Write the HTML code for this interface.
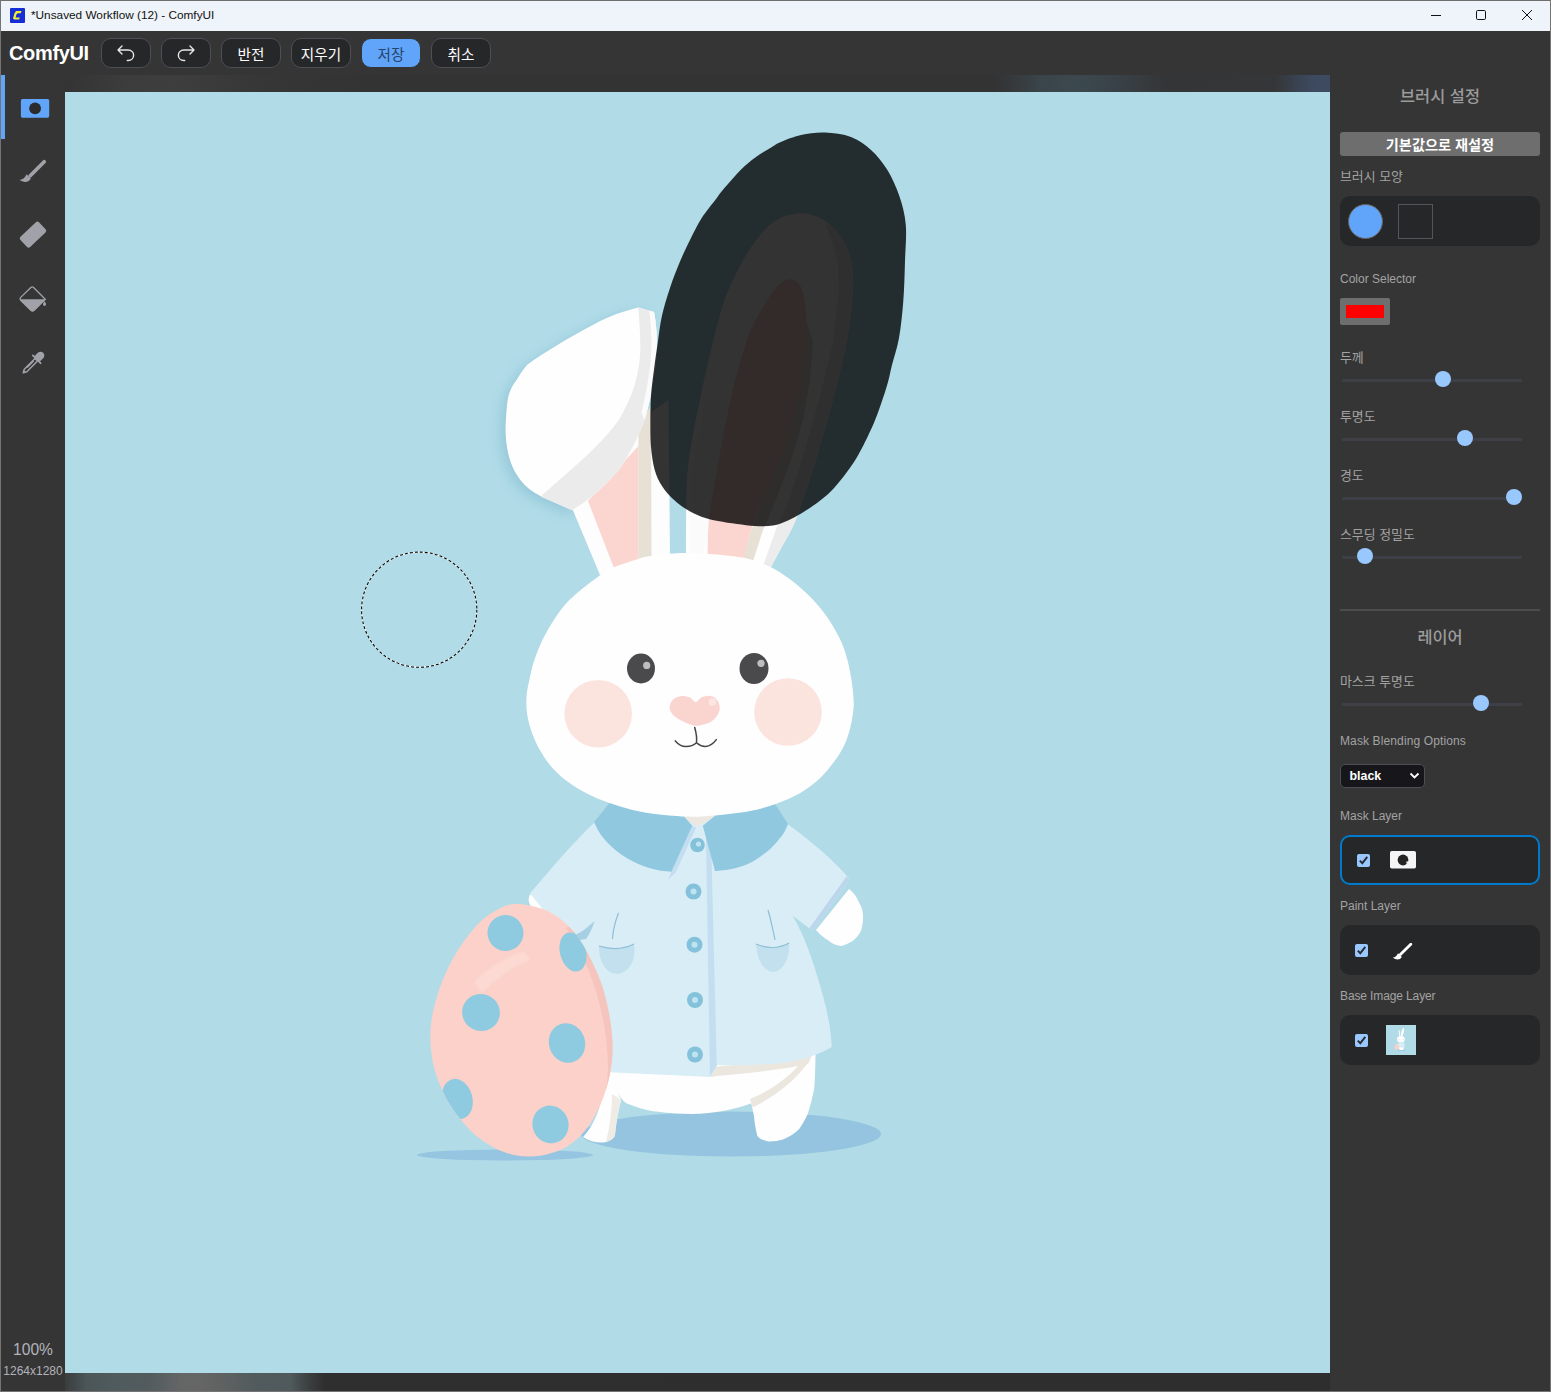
<!DOCTYPE html>
<html lang="ko">
<head>
<meta charset="utf-8">
<title>*Unsaved Workflow (12) - ComfyUI</title>
<style>
*{box-sizing:border-box;margin:0;padding:0}
html,body{width:1551px;height:1392px;overflow:hidden;background:#353535}
body{position:relative;font-family:"Liberation Sans","Noto Sans CJK KR",sans-serif;color:#fff}
.abs{position:absolute}
#frame{position:absolute;left:0;top:0;width:1551px;height:1392px;border:1px solid #747474;border-top-color:#6e6e6e;pointer-events:none;z-index:50}
#titlebar{position:absolute;left:1px;top:1px;width:1549px;height:30px;background:#eef4f9;color:#000}
#titlebar .ticon{position:absolute;left:8.800px;top:6.500px;width:15px;height:15px;background:#172dd7;border-radius:1px}
#titlebar .ttext{position:absolute;left:30px;top:7.400px;font-size:11.800px;line-height:15px;color:#111;white-space:nowrap}
#toolbar{position:absolute;left:1px;top:31px;width:1549px;height:44px;background:#353535}
#logo{position:absolute;left:9px;top:41px;font-size:20px;font-weight:bold;line-height:24px;color:#fff;letter-spacing:-0.35px}
.tbtn{position:absolute;top:38px;height:30px;background:#262729;border:1px solid #4e4e57;border-radius:10px;color:#fff;font-size:14.600px;line-height:32px;text-align:center;overflow:hidden}
.tbtn.primary{background:#60a5fa;border-color:#353535;color:#27446c}
#side{position:absolute;left:1px;top:75px;width:64px;height:1316px;background:#353535}
#canvasbg{position:absolute;left:65px;top:75px;width:1265px;height:1316px;background:#333;overflow:hidden}
#panel{position:absolute;left:1330px;top:75px;width:220px;height:1316px;background:#353535}
.lbl{position:absolute;left:1340px;font-size:12px;line-height:16px;color:#a3a3a3;white-space:nowrap}
.lbl.k{font-size:12.900px}
.hdr{position:absolute;left:1340px;width:200px;text-align:center;font-size:16.400px;line-height:22px;color:#9b9b9b;font-weight:500}
.track{position:absolute;left:1342px;width:180px;height:3.400px;border-radius:1px;background:#3f3f47}
.thumb{position:absolute;width:16px;height:16px;border-radius:50%;background:#99c8ff}
.box{position:absolute;left:1340px;width:200px;height:50px;border-radius:10px;background:#262729}
.chk{position:absolute;width:13px;height:13px;border-radius:2px;background:#99c8ff}
</style>
</head>
<body>
<div id="titlebar">
  <div class="ticon"></div>
  <div class="ttext">*Unsaved Workflow (12) - ComfyUI</div>
</div>
<div id="toolbar"></div>
<div id="logo">ComfyUI</div>
<div class="tbtn" style="left:101px;width:50px"></div>
<div class="tbtn" style="left:161px;width:50px"></div>
<div class="tbtn" style="left:221px;width:60px">반전</div>
<div class="tbtn" style="left:291px;width:60px">지우기</div>
<div class="tbtn primary" style="left:361px;width:60px">저장</div>
<div class="tbtn" style="left:431px;width:60px">취소</div>

<div id="side"></div>
<div id="canvasbg">
  <div class="abs" style="left:0;top:0;width:1265px;height:17px;background:linear-gradient(90deg,#343434 0,#3c3c3c 60px,#3e3e3e 110px,#363636 200px,#333 300px,#333 930px,#3a444a 975px,#3c484f 1010px,#384046 1060px,#343536 1100px,#353637 1210px,#3a4454 1235px,#3e4a60 1250px,#3e4a60 1265px)"></div>
  <div class="abs" style="left:0;top:1298px;width:1265px;height:18px;background:linear-gradient(90deg,#3a3d3e 0,#4c5658 22px,#505b5d 50px,#525c5e 85px,#646565 115px,#666 130px,#5e6161 160px,#515b5d 190px,#505a5c 225px,#3c4041 243px,#2f2f2f 260px,#2e2e2e 1265px)"></div>
</div>
<div id="panel"></div>

<!--PANEL-START-->
<div class="hdr" style="top:85px">브러시 설정</div>
<div class="abs" style="left:1340px;top:132px;width:200px;height:24px;background:#6e6e6e;border-radius:3px;color:#fff;font-size:14.200px;font-weight:bold;line-height:26px;text-align:center">기본값으로 재설정</div>
<div class="lbl k" style="top:169px">브러시 모양</div>
<div class="box" style="top:196px"></div>
<div class="abs" style="left:1348px;top:204px;width:35px;height:35px;border-radius:50%;background:#60a5fa;border:1px solid #6b6059"></div>
<div class="abs" style="left:1398px;top:204px;width:35px;height:35px;border:1px solid #55555a"></div>
<div class="lbl" style="top:271px">Color Selector</div>
<div class="abs" style="left:1340px;top:298px;width:50px;height:27px;background:#6e6e6e;border-radius:2px"></div>
<div class="abs" style="left:1346px;top:305px;width:38px;height:13px;background:#ff0000"></div>

<div class="lbl k" style="top:350px">두께</div>
<div class="track" style="top:379px"></div><div class="thumb" style="left:1435px;top:371px"></div>
<div class="lbl k" style="top:409px">투명도</div>
<div class="track" style="top:438px"></div><div class="thumb" style="left:1457px;top:430px"></div>
<div class="lbl k" style="top:468px">경도</div>
<div class="track" style="top:497px"></div><div class="thumb" style="left:1506px;top:489px"></div>
<div class="lbl k" style="top:527px">스무딩 정밀도</div>
<div class="track" style="top:556px"></div><div class="thumb" style="left:1357px;top:548px"></div>

<div class="abs" style="left:1340px;top:609px;width:200px;height:2px;background:#4d4d4d"></div>
<div class="hdr" style="top:626px">레이어</div>
<div class="lbl k" style="top:674px">마스크 투명도</div>
<div class="track" style="top:703px"></div><div class="thumb" style="left:1473px;top:695px"></div>
<div class="lbl" style="top:733px;letter-spacing:0.120px">Mask Blending Options</div>
<div class="abs" style="left:1340px;top:764px;width:85px;height:24px;background:#17171b;border:1px solid #4e4e58;border-radius:5px;color:#fff;font-size:12.400px;font-weight:bold;line-height:22px;padding-left:8.500px">black</div>
<svg class="abs" style="left:1409px;top:771px" width="11" height="10" viewBox="0 0 11 10"><path d="M1.5 2.500 L5.500 6.500 L9.500 2.500" fill="none" stroke="#fff" stroke-width="1.800"/></svg>

<div class="lbl" style="top:808px">Mask Layer</div>
<div class="box" style="top:835px;border:2px solid #007acc"></div>
<div class="chk" style="left:1357px;top:854px"></div>
<svg class="abs" style="left:1357px;top:854px" width="13" height="13" viewBox="0 0 13 13"><path d="M2.800 6.700 L5.300 9.200 L10.300 2.900" fill="none" stroke="#2a2b30" stroke-width="1.900"/></svg>
<svg class="abs" style="left:1390px;top:851px" width="26" height="18" viewBox="0 0 26 18"><rect x="0" y="0" width="26" height="17.500" rx="1.800" fill="#f5f5f5"/><circle cx="13" cy="9" r="5.400" fill="#242424"/><path d="M16 10.800 L18.800 10.200 L17 13.300Z" fill="#f5f5f5"/></svg>

<div class="lbl" style="top:898px">Paint Layer</div>
<div class="box" style="top:925px"></div>
<div class="chk" style="left:1355px;top:944px"></div>
<svg class="abs" style="left:1355px;top:944px" width="13" height="13" viewBox="0 0 13 13"><path d="M2.800 6.700 L5.300 9.200 L10.300 2.900" fill="none" stroke="#2a2b30" stroke-width="1.900"/></svg>
<svg class="abs" style="left:1392px;top:943px" width="21" height="18" viewBox="0 0 21 18"><path d="M18.800 1.200 L8.400 11.600" stroke="#fff" stroke-width="2.800" stroke-linecap="round" fill="none"/><path d="M6 10.200 L9.800 14 C8 17.400 3.500 17 0.800 14.600 C3.500 14.600 4.800 12.600 6 10.200Z" fill="#fff"/></svg>

<div class="lbl" style="top:988px;letter-spacing:-0.120px">Base Image Layer</div>
<div class="box" style="top:1015px"></div>
<div class="chk" style="left:1355px;top:1034px"></div>
<svg class="abs" style="left:1355px;top:1034px" width="13" height="13" viewBox="0 0 13 13"><path d="M2.800 6.700 L5.300 9.200 L10.300 2.900" fill="none" stroke="#2a2b30" stroke-width="1.900"/></svg>
<svg class="abs" style="left:1386px;top:1025px" width="30" height="30" viewBox="0 0 30 30"><rect width="30" height="30" fill="#b0dbe7"/><ellipse cx="15.200" cy="25" rx="4" ry="0.800" fill="#95c5e0"/><path d="M12.600 5.200 L13.600 5.300 L14 10.800 L13 11Z M14.800 11 C14.800 7 16.500 3 17.700 3 C18.800 3.200 18 7.500 16.500 11Z" fill="#fff"/><ellipse cx="14.900" cy="14.200" rx="3.900" ry="3.200" fill="#fff"/><rect x="12" y="17.500" width="6.500" height="5.800" rx="1" fill="#d9edf6"/><rect x="13.200" y="22.500" width="4.500" height="2.500" rx="1" fill="#fff"/><ellipse cx="10.800" cy="22" rx="2.100" ry="3" fill="#fbd1c9"/><circle cx="12.700" cy="14.600" r="0.800" fill="#fce4de"/><circle cx="17.100" cy="14.600" r="0.800" fill="#fce4de"/></svg>
<!--PANEL-END-->
<!--SIDEBAR-START-->
<div class="abs" style="left:1px;top:75px;width:4px;height:64px;background:#60a5fa"></div>
<!-- mask pen (active) -->
<svg class="abs" style="left:20px;top:97px" width="30" height="24" viewBox="0 0 30 24"><rect x="0.900" y="2.100" width="28.300" height="18.600" rx="1.600" fill="#60a5fa"/><circle cx="15.100" cy="11.300" r="5.900" fill="#2b2b2b"/></svg>
<!-- paint brush -->
<svg class="abs" style="left:18px;top:156px" width="32" height="30" viewBox="0 0 32 30"><path d="M26.200 5.800 L12.200 19.800" stroke="#a1a1a9" stroke-width="3.700" stroke-linecap="round" fill="none"/><path d="M8.600 18.200 L12.800 22.600 C11 27 5 26.800 1.500 23.800 C5.300 23.700 6.900 21.300 8.600 18.200Z" fill="#a1a1a9"/></svg>
<!-- eraser -->
<svg class="abs" style="left:16px;top:217px" width="36" height="36" viewBox="0 0 36 36"><rect x="4.200" y="10.600" width="25.600" height="14" rx="2.200" fill="#a1a1a9" transform="rotate(-43.500 17 17.600)"/></svg>
<!-- paint bucket -->
<svg class="abs" style="left:16.400px;top:282.200px" width="36" height="36" viewBox="0 0 36 36"><path d="M17.800 5.700 L29.300 17.200 L18.200 28.300 C17.200 29.300 15.800 29.300 14.800 28.300 L4.700 18.200 C3.900 17.400 3.900 16.200 4.700 15.400 L14.600 5.700 C15.500 4.800 16.900 4.800 17.800 5.700Z" fill="none" stroke="#a1a1a9" stroke-width="1.300"/><path d="M4.300 17.200 L29.600 17.200 L18.200 28.600 C17.200 29.600 15.800 29.600 14.800 28.600 L4.500 18.400Z" fill="#a1a1a9"/><path d="M28.500 19.300 C30.400 21.600 30.600 23.600 28.500 23.900 C26.400 23.600 26.600 21.600 28.500 19.300Z" fill="#a1a1a9"/></svg>
<!-- eyedropper -->
<svg class="abs" style="left:18px;top:348px" width="30" height="30" viewBox="0 0 30 30"><path d="M19.800 4.800 C21.300 3.300 23.700 3.300 25.200 4.800 C26.700 6.300 26.700 8.700 25.200 10.200 L21.800 13.600 L16.400 8.200Z" fill="#a1a1a9"/><path d="M14.800 7.400 L22.600 15.200" stroke="#a1a1a9" stroke-width="1.800" stroke-linecap="round"/><path d="M17 10.500 L6.300 21.200 L5.200 24.800 L8.800 23.700 L19.500 13Z" fill="none" stroke="#a1a1a9" stroke-width="1.500" stroke-linejoin="round"/><path d="M5.800 22.300 L7.700 24.200 L5 25.200Z" fill="#a1a1a9"/><path d="M9 19.500 L15.500 13" stroke="#a1a1a9" stroke-width="1.600"/></svg>

<div class="abs" style="left:1px;top:1339.500px;width:64px;text-align:center;font-size:15.600px;line-height:20px;color:#b3b3bb">100%</div>
<div class="abs" style="left:1px;top:1364px;width:64px;text-align:center;font-size:12px;line-height:15px;color:#b3b3bb;white-space:nowrap">1264x1280</div>

<!-- toolbar icons -->
<svg class="abs" style="left:115px;top:43px" width="22" height="20" viewBox="0 0 22 20"><path d="M7 3 L3 7 L7 11 M3 7 L13 7 C20.500 7 20.500 17.500 13 17.500 L12.300 17.500" fill="none" stroke="#e8e8e8" stroke-width="1.400" stroke-linecap="round" stroke-linejoin="round"/></svg>
<svg class="abs" style="left:175px;top:43px" width="22" height="20" viewBox="0 0 22 20"><path d="M15 3 L19 7 L15 11 M19 7 L9 7 C1.500 7 1.500 17.500 9 17.500 L9.700 17.500" fill="none" stroke="#e8e8e8" stroke-width="1.400" stroke-linecap="round" stroke-linejoin="round"/></svg>

<!-- window controls -->
<svg class="abs" style="left:1425px;top:5px" width="120" height="22" viewBox="0 0 120 22"><path d="M6 10.500 H16" stroke="#111" stroke-width="1"/><rect x="51.500" y="5.500" width="9" height="9" rx="1.200" fill="none" stroke="#111" stroke-width="1"/><path d="M97 5 L107 15 M107 5 L97 15" stroke="#111" stroke-width="1"/></svg>
<!-- app icon glyph -->
<svg class="abs" style="left:9.800px;top:7.500px" width="15" height="15" viewBox="0 0 15 15"><path d="M6 3 H11.500 L10.800 5.200 H7.800 L6.400 6.600 L5.600 9.400 H9.800 L9.100 11.600 H4.200 L3 10.400 L4.400 5.400 Z" fill="#f0ef2f"/></svg>
<!--SIDEBAR-END-->
<!--CANVAS-START-->
<svg id="art" class="abs" style="left:65px;top:92px" width="1265" height="1281" viewBox="65 92 1265 1281">
<defs><filter id="soft" x="-30%" y="-30%" width="160%" height="160%"><feGaussianBlur stdDeviation="6"/></filter><filter id="soft2" x="-30%" y="-30%" width="160%" height="160%"><feGaussianBlur stdDeviation="1.500"/></filter><filter id="soft3" x="-30%" y="-30%" width="160%" height="160%"><feGaussianBlur stdDeviation="3"/></filter>
<clipPath id="eggclip"><path d="M520 904.1 C528.3 904.8 541.1 907.7 550.1 912.3 C559.1 916.9 567 923.8 573.8 931.7 C580.6 939.6 586 949.8 591 959.8 C596 969.8 600.6 980.1 604 992 C607.4 1003.9 610.3 1019 611.6 1030.9 C612.9 1042.8 612.9 1052.4 611.6 1063.2 C610.3 1074 607.8 1085.2 604 1095.6 C600.2 1106 594.6 1117.5 588.9 1125.7 C583.1 1133.9 576 1140.4 569.5 1145 C563 1149.6 556.9 1151.6 550 1153.5 C543.1 1155.4 535.9 1156.8 528 1156.5 C520.1 1156.2 511.6 1155.3 502.7 1151.6 C493.8 1147.9 483.3 1142 474.7 1134.4 C466.1 1126.9 457.5 1116.4 451 1106.3 C444.5 1096.2 439.3 1084.4 435.9 1074 C432.5 1063.6 431.1 1053.8 430.5 1043.8 C429.9 1033.8 430.6 1024.1 432.6 1013.7 C434.6 1003.3 438.2 991.8 442.3 981.3 C446.4 970.8 451.3 960.7 457.4 951 C463.5 941.3 471.8 930.2 479 923 C486.2 915.8 493.7 911.1 500.5 908 C507.3 904.9 511.7 903.4 520 904.1Z"/></clipPath>
<clipPath id="flapclip"><path d="M638.600 307.600 L654 312 C658 332 657.500 355 654.700 373 C652.500 388 650 400 646.800 412.500 C643 428 628 458 618.800 470 C610 480 602 488 593.700 495 C586 501 579 506 572 510.200 L542 496.900 C537 494 532 491.500 528.300 488.300 C522 483 518 477 514.500 471 C510 462 508 454 506.700 445.200 C505.500 436 505.300 428 505.900 419.300 C506.300 412 506.800 405 508 398 C509.500 391 512.500 385 516.500 380 C519.500 375 523 369.500 527.200 364.700 C545 352 570 337 593.700 324.500 C610 316 625 310.500 638.600 307.600Z"/></clipPath>
<clipPath id="rearclip"><path d="M686 585 C673.4 571.8 685.8 526 686.3 505 C686.8 484 686.4 478.2 689 459 C691.6 439.8 696.8 414.3 702 390 C707.2 365.7 715.1 331.8 720.5 313 C725.9 294.2 729.1 288.4 734.5 277 C739.9 265.6 746.3 253.8 752.7 244.7 C759.1 235.6 765.4 227.8 772.8 222.6 C780.2 217.4 788.9 214.2 796.9 213.5 C804.9 212.8 813.6 214.7 821 218.6 C828.4 222.5 836 229.7 841 236.7 C846 243.7 849 251.8 851 260.8 C853 269.9 853.7 277.6 853 291 C852.3 304.4 850.3 322.8 847 341 C843.7 359.2 837.7 381.8 833 400 C828.3 418.2 824 433.3 819 450 C814 466.7 807.4 487.2 803 500 C798.6 512.8 796.1 519.3 792.6 527 C789.1 534.7 785.7 539.7 782.3 546 C778.9 552.3 775.4 558.7 772 565 C768.6 571.3 776 580.7 761.7 584 C747.4 587.3 698.6 598.2 686 585Z"/></clipPath>
</defs>
<rect x="65" y="92" width="1265" height="1281" fill="#b0dbe7"/>
<ellipse cx="731" cy="1134" rx="150" ry="22.500" fill="#94c4e0"/>
<ellipse cx="505" cy="1155" rx="88" ry="5.500" fill="#95c5e0"/>
<path d="M638.600 307.600 L654 312 C658 332 657.500 355 654.700 373 C652.500 388 650 400 646.800 412.500 C643 428 628 458 618.800 470 C610 480 602 488 593.700 495 C586 501 579 506 572 510.200 L542 496.900 C537 494 532 491.500 528.300 488.300 C522 483 518 477 514.500 471 C510 462 508 454 506.700 445.200 C505.500 436 505.300 428 505.900 419.300 C506.300 412 506.800 405 508 398 C509.500 391 512.500 385 516.500 380 C519.500 375 523 369.500 527.200 364.700 C545 352 570 337 593.700 324.500 C610 316 625 310.500 638.600 307.600Z" fill="#8fc3d6" opacity=".75" filter="url(#soft)" transform="translate(-5,4)"/>
<path d="M572 508 L600 575 L670 560 L668.500 400 L640 420 Z" fill="#fdfdfd"/>
<path d="M588 501 L638.500 446 L638.500 560 L614 568 Z" fill="#fbd5cf"/>
<path d="M638.500 428 L651 405 L651.500 558 L638.500 560 Z" fill="#e6e0d5"/>
<path d="M638.600 307.600 L654 312 C658 332 657.500 355 654.700 373 C652.500 388 650 400 646.800 412.500 C643 428 628 458 618.800 470 C610 480 602 488 593.700 495 C586 501 579 506 572 510.200 L542 496.900 C537 494 532 491.500 528.300 488.300 C522 483 518 477 514.500 471 C510 462 508 454 506.700 445.200 C505.500 436 505.300 428 505.900 419.300 C506.300 412 506.800 405 508 398 C509.500 391 512.500 385 516.500 380 C519.500 375 523 369.500 527.200 364.700 C545 352 570 337 593.700 324.500 C610 316 625 310.500 638.600 307.600Z" fill="#fefefe"/>
<g clip-path="url(#flapclip)">
<path d="M637.8 300 C638.2 306.9 640.2 330.4 640.3 341.7 C640.4 353 640 359 638.6 367.6 C637.2 376.2 635.2 384.5 631.7 393.4 C628.2 402.3 623.6 412.4 617.9 421 C612.1 429.6 605 437.1 597.2 445.2 C589.5 453.2 580.6 461 571.4 469.3 C562.2 477.6 548.9 489.2 542 495.2 C535.1 501.1 532 503.4 530 505 L560 535 L640 490 L690 400 L670 300Z" fill="#ebebeb"/>
<path d="M648.500 305 C652.500 332 652 355 649.200 373 C647 388 644.500 400 641.500 412.500 L646 424 L664 370 L662 300Z" fill="#fbfbfb"/>
</g>
<path d="M686 585 C686 571.7 685.8 526 686.3 505 C686.8 484 686.4 478.2 689 459 C691.6 439.8 696.8 414.3 702 390 C707.2 365.7 715.1 331.8 720.5 313 C725.9 294.2 729.1 288.4 734.5 277 C739.9 265.6 746.3 253.8 752.7 244.7 C759.1 235.6 765.4 227.8 772.8 222.6 C780.2 217.4 788.9 214.2 796.9 213.5 C804.9 212.8 813.6 214.7 821 218.6 C828.4 222.5 836 229.7 841 236.7 C846 243.7 849 251.8 851 260.8 C853 269.9 853.7 277.6 853 291 C852.3 304.4 850.3 322.8 847 341 C843.7 359.2 837.7 381.8 833 400 C828.3 418.2 824 433.3 819 450 C814 466.7 807.4 487.2 803 500 C798.6 512.8 796.1 519.3 792.6 527 C789.1 534.7 785.7 539.7 782.3 546 C778.9 552.3 775.4 558.7 772 565 C768.6 571.3 763.4 580.8 761.7 584" fill="#fefefe"/>
<g clip-path="url(#rearclip)">
<path d="M826 225 L838 262 L839 291 L833 341 L819 400 L805 450 L789 500 L776.500 528 L758 580 L800 580 L870 400 L870 225Z" fill="#ececec"/>
<path d="M760 400 L720 480 L700 568 L690 568 L690 480 L705 400Z" fill="#f7f7f7" opacity=".5"/>
</g>
<path d="M707.6 580 C707.8 570.7 707.2 541.2 708.6 524 C710 506.8 712.1 497.7 715.8 477 C719.4 456.3 725.4 422.6 730.5 400 C735.6 377.4 741.6 356.1 746.6 341.3 C751.6 326.5 755.7 320.1 760.7 311 C765.7 301.9 771.9 292.4 776.8 287 C781.7 281.6 785.9 278.9 789.9 278.9 C793.9 278.9 798.3 281.6 801 287 C803.7 292.4 805.2 301.9 806 311 C806.8 320.1 806.8 329.8 806 341.3 C805.2 352.8 803.2 366.9 801 380 C798.8 393.1 796.5 406.7 793 420 C789.5 433.3 784.7 447.5 780 460 C775.3 472.5 769.8 483.2 765 495 C760.2 506.8 755.2 516.8 751 531 C746.8 545.2 741.8 571.8 740 580" fill="#fbd5cf"/>
<path d="M806.500 322 L806 341 L801 380 L793 420 L780 460 L765 495 L751 531 L738 580 L747 580 L762.700 531 L777 497 L791 460 L803 420 L810 380 L813 341Z" fill="#e6e0d5"/>
<path d="M607 1066 C604 1100 596 1124 583 1137 C590 1142 600 1143.500 606 1142 C610 1141 613 1139 614.800 1136 C616 1124 618 1112 621 1100 Z" fill="#fefefe"/>
<path d="M614.800 1136 C616 1124 618 1112 621 1100 L612 1094 C612 1110 610 1126 606 1142 C610 1141 613 1139 614.800 1136Z" fill="#efece6"/>
<path d="M608 1066 C612 1084 618 1096 625.800 1103 C640 1109 650 1111 658.600 1111.800 C670 1113.500 680 1114 691.500 1114 C703 1114 714 1112.500 724.400 1110.700 C735 1108.500 744 1106 752 1103 L816 1056 L760 1020 L640 1030 Z" fill="#fefefe"/>
<path d="M815.400 1054 C815.500 1066 815 1078 814.300 1087.700 C812.500 1098 810 1107 807.700 1114 C805 1120 802 1125 799 1129.300 C794 1134 789 1137 783.600 1139.200 C778 1141 773 1141.600 768.200 1141.400 C763 1140.500 759.500 1138.500 757.300 1136 C755.500 1129 754.500 1122 754 1116 L751 1102 C775 1090 798 1072 812 1052Z" fill="#fefefe"/>
<path d="M752.900 1107.400 C776 1096 796 1080 810 1060 L805 1057 C792 1076 772 1090 750 1099Z" fill="#ebe7df"/>
<path d="M711 1067 L800 1059.500 L812 1055 L808 1064 C780 1070 750 1073 716 1076 L711 1077Z" fill="#ebe7df"/>
<path d="M849 889 C854 893 857 897 859 902.600 C862 907 863 912 863 916.700 C863 922 862.500 926 861 930.800 C859 935 856.500 938 853 940.800 C849 943.500 845 945.300 840.800 945.900 C836 945.500 832 943.500 828.800 940.800 C824 938 820 934.500 816 930 Z" fill="#fefefe"/>
<path d="M530.500 894 C527.500 898 528 904 533 908 L548 914 L546 896Z" fill="#fefefe"/>
<path d="M604 810 L594 823 C580 836 560 858 530 893.600 L545 912 L580 940 C590 980 600 1030 609 1072.300 L711 1077 L716.700 1065 C740 1065.500 760 1065 779 1063.600 C791 1062 802 1059.500 812 1056 C819 1053.500 826 1050.500 831.800 1047 C831 1035 830 1028 828.800 1021 C826 1006 822 992 818.700 981 C815 968 811 956 806.600 944.900 C803 935 798 925 792.600 915.700 L812.700 930.800 L850 879.500 C842 870 832 860 820.700 850.300 C810 841 799 832 787.500 824 L772 806 Z" fill="#d9edf6"/>
<path d="M706 838 L711 834 L716.700 1066 L710 1076 Z" fill="#c3def0"/>
<path d="M850 879.500 L812.700 930.800 L809.300 928.300 L846.500 876.500Z" fill="#bcd6ec"/>
<path d="M594.600 921 C592 929 589 935 586 939 L580 940 L575 935 C582 932 588 927 594.600 921Z" fill="#a6cfe3"/>
<path d="M599 946 C612 950 624 949 634 944 C636 960 630 972 618 974 C606 974 599 962 599 946Z" fill="#c2e0ee"/>
<path d="M756 944 C768 949 780 948 789 943 C790 958 784 970 774 972 C764 972 757 960 756 944Z" fill="#c2e0ee"/>
<path d="M599 946 C612 950 624 949 634 944 M756 944 C768 949 780 948 789 943 M618.500 913 C615 922 613 930 612.500 939 M768 910 C771 920 773 930 775 940" fill="none" stroke="#8dbfd6" stroke-width="1.200"/>
<path d="M676 805 L720 805 L718 815 L697.500 826.600 L678 815Z" fill="#ece8e1"/>
<path d="M692.300 825.700 L671.400 871.800 L668 880 L676 872 L696 828Z" fill="#c3def0"/>
<path d="M612 800 L594 822 C595.3 824.3 597.9 831 601.8 836 C605.7 841 611.4 847.1 617.5 851.8 C623.6 856.5 631.6 861 638.3 864 C645 867 652 868.7 657.5 870 C663 871.3 669.1 871.5 671.4 871.8 L692.300 825.700 L680 812 L680 800 Z" fill="#90c8e0"/>
<path d="M702.800 825.700 L715 871 C718.2 870.6 727.9 869.9 734 868.4 C740.1 866.9 745.7 865.4 751.5 862.3 C757.3 859.2 763.8 854.6 769 850 C774.2 845.4 779.6 838.7 782.8 834.4 C786 830.1 787.1 825.7 788 824 L772.400 800 L716 800 L716 815 Z" fill="#90c8e0"/>
<g fill="#84c2dc"><circle cx="697.500" cy="845" r="7.300"/><circle cx="693.500" cy="891.500" r="8"/><circle cx="694.500" cy="944.700" r="8"/><circle cx="695" cy="1000" r="8"/><circle cx="695" cy="1054.500" r="8"/></g>
<g fill="#bfe3f0"><circle cx="698.500" cy="844" r="2.600"/><circle cx="693.500" cy="891.500" r="3"/><circle cx="694.500" cy="944.700" r="3"/><circle cx="695" cy="1000" r="3"/><circle cx="695" cy="1054.500" r="3"/></g>
<path d="M686 552.9 C692.3 552.9 699.7 553.3 707.3 553.8 C714.9 554.3 724.7 555.2 731.8 556.1 C738.9 557 743.4 557.5 749.9 559.3 C756.4 561.1 764.1 564 770.5 567.1 C776.9 570.2 782.5 573.9 788.3 578.1 C794.1 582.3 800 587.2 805.4 592.2 C810.8 597.2 816 602.8 820.5 608.3 C825 613.8 829 619.7 832.5 625.4 C836 631.1 839.1 636.6 841.6 642.5 C844.1 648.4 845.9 654.2 847.6 660.6 C849.3 667 850.6 674.6 851.6 680.7 C852.6 686.8 853.1 692.4 853.4 697 C853.7 701.6 854 703.4 853.5 708.4 C853 713.4 852 720.7 850.5 726.8 C849 732.9 847 739.4 844.4 745.1 C841.8 750.8 838.7 755.5 834.6 761 C830.5 766.5 825.6 772.9 819.9 778.2 C814.2 783.5 807.6 788.6 800.3 792.9 C792.9 797.2 784 800.9 775.8 803.9 C767.6 806.9 759.5 809 751.3 810.7 C743.1 812.4 735 813.3 726.8 814.3 C718.6 815.2 709 816 702 816.4 C695 816.8 690.5 816.7 685 816.6 C679.5 816.5 676 816.3 669.3 815.6 C662.6 814.9 653 814 644.8 812.5 C636.6 811 628.5 808.9 620.3 806.4 C612.1 803.9 604 801.5 595.8 797.8 C587.6 794.1 578.4 789.2 571.3 784.3 C564.1 779.4 558 773.9 552.9 768.4 C547.8 762.9 544.1 757.2 540.6 751.3 C537.1 745.4 534.2 739 532 732.9 C529.8 726.8 528.1 720.5 527.2 714.5 C526.3 708.5 526.2 702.6 526.5 697 C526.8 691.4 527.9 686.8 529.2 680.7 C530.5 674.6 532 667.3 534.2 660.6 C536.4 653.9 539.2 646.9 542.2 640.5 C545.2 634.1 548.4 628.4 552.3 622.4 C556.2 616.4 560.7 609.7 565.4 604.3 C570.1 598.9 574.5 595.2 580.5 590.2 C586.5 585.2 595.9 578.1 601.6 574.2 C607.3 570.4 608.3 569.7 614.5 567.1 C620.7 564.5 632.8 560.6 639 558.7 C645.2 556.8 646.9 556.6 651.9 555.8 C656.9 555 663.6 554.3 669.3 553.8 C675 553.3 679.7 552.9 686 552.9Z" fill="#fefefe"/>
<circle cx="598.200" cy="713.700" r="33.800" fill="#fce4de"/><circle cx="788" cy="712" r="33.800" fill="#fce4de"/>
<ellipse cx="641" cy="668.500" rx="14" ry="15" fill="#4a4a4c"/><ellipse cx="754" cy="668.500" rx="14.500" ry="15.500" fill="#4a4a4c"/>
<circle cx="646.700" cy="665.400" r="3.600" fill="#bdbdbd"/><circle cx="761" cy="663.300" r="3.600" fill="#bdbdbd"/>
<path d="M695.6 702.2 C693.7 702.2 692.4 698.5 690 697.5 C687.6 696.5 684.2 695.7 681.4 696 C678.6 696.3 675 697.6 673 699.5 C671 701.4 669.9 704.9 669.7 707.2 C669.5 709.5 670.9 711.8 672 713.5 C673.1 715.2 674 716.1 676.2 717.6 C678.4 719.1 681.8 721.1 685 722.5 C688.2 723.9 692.1 725.5 695.2 725.8 C698.3 726.1 700.9 725.1 703.5 724.5 C706.1 723.9 708.5 723.2 710.7 721.9 C712.9 720.6 715 718.6 716.5 716.5 C718 714.4 719.5 711.7 719.7 709 C719.9 706.3 719 702.7 717.5 700.5 C716 698.3 713.4 696.5 710.7 696 C708 695.5 704 696.5 701.5 697.5 C699 698.5 697.5 702.2 695.6 702.2Z" fill="#fad5cf"/>
<circle cx="712.400" cy="702" r="3.800" fill="#fce6e2"/>
<path d="M694.700 727.500 C696.300 733 697 738 696.500 742.800 M675.300 740.900 C678 744 681.500 746.300 685.700 746.500 C690 746.600 694 745 696.500 742.800 C699 745 702 746.600 705.500 746.500 C710 746 713.500 743.500 716.300 739.600" fill="none" stroke="#484444" stroke-width="1.500" stroke-linecap="round"/>
<path d="M520 904.1 C528.3 904.8 541.1 907.7 550.1 912.3 C559.1 916.9 567 923.8 573.8 931.7 C580.6 939.6 586 949.8 591 959.8 C596 969.8 600.6 980.1 604 992 C607.4 1003.9 610.3 1019 611.6 1030.9 C612.9 1042.8 612.9 1052.4 611.6 1063.2 C610.3 1074 607.8 1085.2 604 1095.6 C600.2 1106 594.6 1117.5 588.9 1125.7 C583.1 1133.9 576 1140.4 569.5 1145 C563 1149.6 556.9 1151.6 550 1153.5 C543.1 1155.4 535.9 1156.8 528 1156.5 C520.1 1156.2 511.6 1155.3 502.7 1151.6 C493.8 1147.9 483.3 1142 474.7 1134.4 C466.1 1126.9 457.5 1116.4 451 1106.3 C444.5 1096.2 439.3 1084.4 435.9 1074 C432.5 1063.6 431.1 1053.8 430.5 1043.8 C429.9 1033.8 430.6 1024.1 432.6 1013.7 C434.6 1003.3 438.2 991.8 442.3 981.3 C446.4 970.8 451.3 960.7 457.4 951 C463.5 941.3 471.8 930.2 479 923 C486.2 915.8 493.7 911.1 500.5 908 C507.3 904.9 511.7 903.4 520 904.1Z" fill="#fbd1c9"/>
<g clip-path="url(#eggclip)">
<path d="M566 928 C592 966 607 1016 608 1066 C608 1106 594 1138 566 1154 L640 1160 L640 900Z" fill="#f4c1b9" opacity=".8"/>
<path d="M474 982 C490 966 508 956 524 951 L531 960 C514 966 498 977 482 993Z" fill="#fde3dd" opacity=".5" filter="url(#soft2)"/>
<g fill="#8fcbe0"><ellipse cx="505.500" cy="933" rx="18" ry="18" transform="rotate(20 505.500 933)"/><ellipse cx="573" cy="952" rx="13" ry="20" transform="rotate(-15 573 952)"/><ellipse cx="481" cy="1012.500" rx="19" ry="18.500" transform="rotate(25 481 1012.500)"/><ellipse cx="567" cy="1043" rx="18" ry="20" transform="rotate(-20 567 1043)"/><ellipse cx="457.400" cy="1099" rx="15" ry="20.500" transform="rotate(-15 457.400 1099)"/><ellipse cx="550.500" cy="1124.500" rx="18" ry="19" transform="rotate(-20 550.500 1124.500)"/></g>
</g>
<path d="M825 132.5 C833.3 132.8 843.3 134.1 851 137 C858.7 139.9 864.9 144.5 871 150 C877.1 155.5 882.6 162.3 887.4 170 C892.1 177.7 896.4 187.2 899.5 196.4 C902.6 205.6 904.9 214.2 905.8 225 C906.7 235.8 905.4 248.3 905 261 C904.6 273.7 904.3 288.2 903.3 301 C902.3 313.8 900.9 327.3 899 338 C897.1 348.7 893.8 357.7 892 365 C890.2 372.3 889.8 375.5 888 382 C886.2 388.5 883.4 397.2 881 404 C878.6 410.8 876.6 416.7 873.9 423 C871.2 429.3 868 436 865 442 C862 448 859.4 453.3 855.9 459 C852.4 464.7 848.2 470.6 844 476 C839.8 481.4 835.2 487 830.7 491.5 C826.2 496 821.8 499.4 817 503 C812.2 506.6 806.8 510.1 802 513 C797.2 515.9 792.8 518.4 788 520.5 C783.2 522.6 778.5 524.7 773 525.6 C767.5 526.5 761 526.3 755 526 C749 525.7 743.2 524.8 737 524 C730.8 523.2 723.9 522.2 718 521 C712.1 519.8 706.7 518.7 701.4 516.7 C696.1 514.7 690.8 512 686 509 C681.2 506 676.7 502.5 672.7 498.7 C668.7 494.9 665 490.8 662 486 C659 481.2 656.5 476.5 654.7 470 C652.9 463.5 651.7 454.8 651 447 C650.3 439.2 650.4 431.5 650.4 423 C650.4 414.5 650.4 404.9 651 396 C651.6 387.1 652.8 378.6 654 369.4 C655.2 360.2 656.7 350 658 341 C659.3 332 660 324.3 662 315.5 C664 306.7 667 297 670 288 C673 279 676.7 269.6 680 261.6 C683.3 253.6 686.4 247.2 690 240 C693.6 232.8 697 225.4 701.4 218.5 C705.8 211.6 712.8 203.3 716.4 198.5 C720 193.7 719 194.6 723 189.8 C727 185.1 735.2 175.4 740.6 170 C746 164.6 750.1 161.3 755.3 157.5 C760.5 153.7 767.8 149.6 772 147 C776.2 144.4 776 144 780.8 142 C785.6 140 793.6 136.6 801 135 C808.4 133.4 816.7 132.2 825 132.5Z" fill="#000" fill-opacity=".8"/>
<circle cx="419.200" cy="609.700" r="57.600" fill="none" stroke="#fff" stroke-width="1"/>
<circle cx="419.200" cy="609.700" r="57.600" fill="none" stroke="#000" stroke-width="1.050" stroke-dasharray="3 2.030"/>
</svg>
<!--CANVAS-END-->
<div id="frame"></div>
</body>
</html>
